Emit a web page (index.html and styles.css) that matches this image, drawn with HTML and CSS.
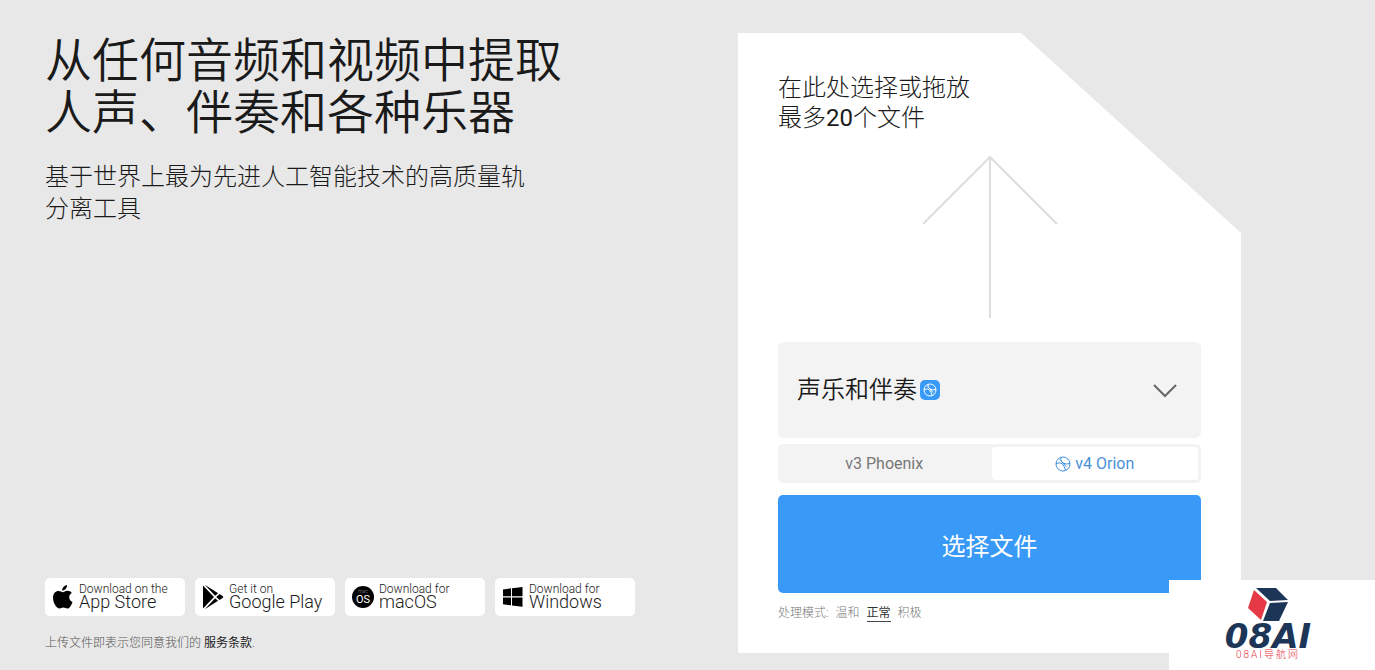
FILE: index.html
```html
<!DOCTYPE html>
<html lang="zh-CN">
<head>
    <meta charset="UTF-8">
    <meta name="viewport" content="width=device-width, initial-scale=1.0">
    <title>人声和伴奏提取</title>
    <link rel="stylesheet" href="styles.css">
</head>
<body>
    <main class="page">
        <section class="intro">
            <h1>从任何音频和视频中提取<br>人声、伴奏和各种乐器</h1>
            <p class="subtitle">基于世界上最为先进人工智能技术的高质量轨<br>分离工具</p>
            <div class="stores">
                <a class="store" href="#">
                    <svg width="22" height="26" viewBox="0 0 22 26">
                        <path d="M15 1c.2 3-2 5.500-4.800 5.500C10 4 12.300 1.500 15 1zM10.800 8.200c1 0 2.500-1.500 4.700-1.500 1.800 0 3.400.9 4.300 2.300-3.800 2.200-3.200 7.300.7 8.900-.8 2.500-2.800 6.600-5.200 6.600-1.500 0-2-.9-3.900-.9s-2.500.9-3.900.9C4.600 24.500 1 19 1 13.800 1 9.500 3.500 7 6.500 7c1.900 0 3.200 1.200 4.300 1.200z"/>
                    </svg>
                    <span class="store-text"><small>Download on the</small>App Store</span>
                </a>
                <a class="store" href="#">
                    <svg width="22" height="26" viewBox="0 0 22 26">
                        <path d="M1 1.500v23L12 13zM2.800.8l10.300 10.900 3-2.500zM2.800 25.200l10.300-10.900 3 2.500zM14.200 13l3.400-3 3.300 2.200q.8.800 0 1.600L17.600 16z"/>
                    </svg>
                    <span class="store-text"><small>Get it on</small>Google Play</span>
                </a>
                <a class="store" href="#">
                    <svg width="22" height="26" viewBox="0 0 22 26">
                        <circle cx="11" cy="13" r="11"/>
                        <text class="mac-small" x="11" y="9" text-anchor="middle">mac</text>
                        <text class="mac-os" x="11" y="19" text-anchor="middle">OS</text>
                    </svg>
                    <span class="store-text"><small>Download for</small>macOS</span>
                </a>
                <a class="store" href="#">
                    <svg width="22" height="26" viewBox="0 0 22 26">
                        <path d="M1 5.500l8-1.200v8H1zM10 4.200L20.500 3v9.300H10zM1 13.400h8v7.900l-8-1.100zM10 13.400h10.500v9.400L10 21.400z"/>
                    </svg>
                    <span class="store-text"><small>Download for</small>Windows</span>
                </a>
            </div>
            <p class="terms">上传文件即表示您同意我们的 <a href="#">服务条款</a>.</p>
        </section>

        <section class="card">
            <h2>在此处选择或拖放<br>最多<b>20</b>个文件</h2>
            <svg class="arrow" width="136" height="162" viewBox="0 0 136 162">
                <path d="M68 162V1M1 68L68 1l67 67"/>
            </svg>
            <div class="splitter">
                <select aria-label="分离类型">
                    <option>声乐和伴奏</option>
                </select>
                <svg class="splitter-badge" width="20" height="20" viewBox="0 0 20 20">
                    <rect width="20" height="20" rx="5"/>
                    <circle cx="10" cy="10" r="6"/>
                    <path d="M8 4.300Q7.500 7.500 10 9t6 .5M4 9.500q4-1.500 5.500.5t2.800 5.500M7.800 6.500l5.200 6"/>
                </svg>
                <svg class="chevron" width="24" height="14" viewBox="0 0 24 14">
                    <path d="M1 1l11 11L23 1"/>
                </svg>
            </div>
            <div class="versions">
                <button type="button">v3 Phoenix</button>
                <button type="button" class="active">
                    <svg width="16" height="16" viewBox="0 0 16 16">
                        <circle cx="8" cy="8" r="7"/>
                        <path d="M5.700 1.500Q5 5.200 8 7t7 .5M1 7.500q4.800-1.700 6.500.5t3.200 6.500M5.500 4l6 7"/>
                    </svg>
                    v4 Orion
                </button>
            </div>
            <button type="button" class="choose">选择文件</button>
            <div class="modes">
                <span>处理模式:</span>
                <button type="button">温和</button>
                <button type="button" class="active">正常</button>
                <button type="button">积极</button>
            </div>
        </section>
    </main>

    <aside class="sitemark">
        <svg width="40" height="34" viewBox="0 0 40 34">
            <path class="red" d="M6 2l13 12-6 18L0 20z"/>
            <path class="navy" d="M8 0h20l12 12-18 1zM22 15l18-1-9 19H15z"/>
        </svg>
        <strong>08AI</strong>
        <span>08AI导航网</span>
    </aside>
</body>
</html>
```
FILE: styles.css
```css
* {
    box-sizing: border-box;
}
body {
    margin: 0;
    background: #e8e8e8;
    color: #1a1a1a;
    font-family: Roboto, "Noto Sans CJK SC", sans-serif;
    font-weight: 300;
}
h1, h2, p {
    margin: 0;
    font-weight: 300;
}
button, select {
    border: 0;
    padding: 0;
    background: none;
    color: inherit;
    font: inherit;
    cursor: pointer;
}
.page {
    display: grid;
    grid-template-columns: 693fr 503fr;
    min-height: 100vh;
    padding: 33px 134px 17px 45px;
}

.intro {
    display: flex;
    flex-direction: column;
    padding-top: 2px;
}
h1 {
    font-size: 47px;
    line-height: 52px;
    font-weight: 350;
}
.subtitle {
    margin-top: 22px;
    font-size: 24px;
    line-height: 32px;
}
.stores {
    display: flex;
    gap: 10px;
    margin-top: auto;
}
.store {
    display: flex;
    align-items: center;
    gap: 5px;
    width: 140px;
    height: 38px;
    padding-left: 7px;
    border-radius: 5px;
    background: #fff;
    color: #1a1a1a;
    text-decoration: none;
    font-size: 18px;
    line-height: 14px;
    white-space: nowrap;
}
.store-text {
    padding-bottom: 2px;
}
.store small {
    display: block;
    font-size: 12px;
    line-height: 12px;
}
.mac-small {
    fill: #999;
    font-size: 5px;
}
.mac-os {
    fill: #fff;
    font-size: 11px;
    font-weight: 400;
}
.terms {
    margin-top: 18px;
    color: #555;
    font-size: 12px;
    line-height: 19px;
}
.terms a {
    color: #1a1a1a;
    font-weight: 400;
    text-decoration: none;
}

.card {
    display: flex;
    flex-direction: column;
    padding: 40px 40px 30px;
    background: #fff;
    clip-path: polygon(0 0, calc(100% - 220px) 0, 100% 200px, 100% 100%, 0 100%);
}
h2 {
    font-size: 24px;
    line-height: 30px;
}
h2 b {
    font-weight: 400;
}
.arrow {
    align-self: center;
    margin: 23px 0 24px;
    fill: none;
    stroke: #ddd;
    stroke-width: 2;
}
.splitter {
    position: relative;
}
.splitter select {
    display: block;
    width: 100%;
    height: 96px;
    padding: 0 19px;
    border-radius: 6px;
    background: #f3f3f3;
    font-size: 24px;
    font-weight: 350;
    appearance: none;
}
.splitter-badge {
    position: absolute;
    top: 38px;
    left: 142px;
    fill: none;
    stroke: #fff;
    pointer-events: none;
}
.splitter-badge rect {
    fill: #3899f6;
    stroke: none;
}
.chevron {
    position: absolute;
    top: 42px;
    right: 24px;
    fill: none;
    stroke: #666;
    stroke-width: 2;
    pointer-events: none;
}
.versions {
    display: grid;
    grid-template-columns: 1fr 1fr;
    gap: 4px;
    height: 39px;
    margin: 6px 0 12px;
    padding: 3px;
    border-radius: 5px;
    background: #f3f3f3;
}
.versions button {
    display: flex;
    align-items: center;
    justify-content: center;
    gap: 4px;
    border-radius: 4px;
    color: #777;
    font-size: 16px;
    font-weight: 400;
}
.versions .active {
    background: #fff;
    color: #4a90d9;
}
.versions svg {
    fill: none;
    stroke: #3c8edb;
}
.choose {
    height: 98px;
    border-radius: 5px;
    background: #3899f6;
    color: #fff;
    font-size: 24px;
    font-weight: 400;
}
.modes {
    display: flex;
    align-items: flex-start;
    gap: 7px;
    margin-top: 12px;
    color: #777;
    font-size: 12px;
    line-height: 16px;
}
.modes .active {
    border-bottom: 1px solid #444;
    color: #333;
    font-weight: 400;
}

.sitemark {
    position: fixed;
    right: 0;
    bottom: 0;
    display: flex;
    flex-direction: column;
    align-items: center;
    width: 206px;
    height: 90px;
    padding: 8px 8px 0 0;
    background: #fff;
}
.sitemark strong {
    color: #1d3557;
    font: italic bold 34px/28px "DejaVu Sans", sans-serif;
}
.sitemark span {
    color: #e63946;
    font-size: 10px;
    line-height: 10px;
    letter-spacing: 2px;
}
.red {
    fill: #e63946;
}
.navy {
    fill: #1d3557;
}
```
